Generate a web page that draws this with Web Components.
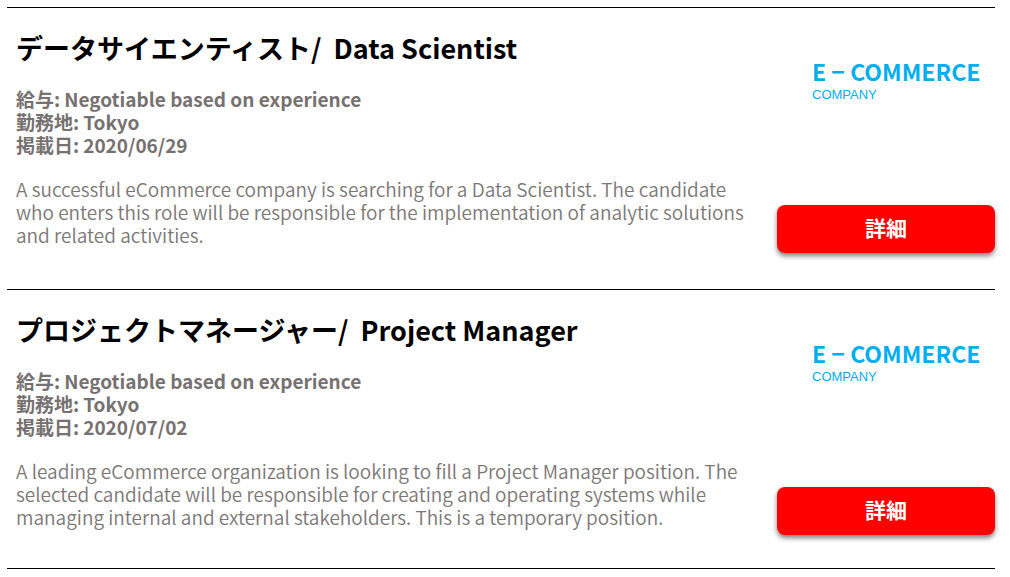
<!DOCTYPE html>
<html lang="ja">
<head>
<meta charset="utf-8">
<meta name="viewport" content="width=device-width, initial-scale=1">
<title>求人情報</title>
<style>
  body { margin: 0; background: #fff; font-family: "Noto Sans CJK JP", "Noto Sans", sans-serif; }
</style>
</head>
<body>
<job-list>
  <job-card>
    <span slot="title-ja">データサイエンティスト/</span>
    <span slot="title-en">Data Scientist</span>
    <span slot="salary">Negotiable based on experience</span>
    <span slot="location">Tokyo</span>
    <span slot="date">2020/06/29</span>
    A successful eCommerce company is searching for a Data Scientist. The candidate who enters this role will be responsible for the implementation of analytic solutions and related activities.
    <company-logo slot="logo"></company-logo>
  </job-card>
  <job-card>
    <span slot="title-ja">プロジェクトマネージャー/</span>
    <span slot="title-en">Project Manager</span>
    <span slot="salary">Negotiable based on experience</span>
    <span slot="location">Tokyo</span>
    <span slot="date">2020/07/02</span>
    A leading eCommerce organization is looking to fill a Project Manager position. The selected candidate will be responsible for creating and operating systems while managing internal and external stakeholders. This is a temporary position.
    <company-logo slot="logo"></company-logo>
  </job-card>
</job-list>

<template id="job-list">
  <style>
    :host { display: block; margin: 7px 15px 8px 7px; border-bottom: 1px solid #000; }
  </style>
  <slot></slot>
</template>

<template id="company-logo">
  <style>
    :host { display: block; color: #00aeef; }
    .name { font-size: 23px; line-height: 26px; font-weight: 700; white-space: nowrap; }
    .kind { font-family: "Liberation Sans", Arial, sans-serif; font-size: 13px; line-height: 22px; }
  </style>
  <div class="name">E − COMMERCE</div>
  <div class="kind">COMPANY</div>
</template>

<template id="detail-button">
  <style>
    :host { display: block; }
    button {
      display: block; width: 100%; height: 48px; padding: 0 0 4px; border: 0; border-radius: 8px;
      background: #f00; color: #fff; font: inherit; font-size: 21px; line-height: 32px; font-weight: 700;
      box-shadow: 0 3px 5px rgba(0, 0, 0, .5); cursor: pointer;
    }
  </style>
  <button type="button"><slot></slot></button>
</template>

<template id="job-card">
  <style>
    :host { display: block; border-top: 1px solid #000; }
    article { display: grid; grid-template-columns: minmax(0, 1fr) 218px; column-gap: 30px; padding-left: 9px; }
    .text { padding: 20px 0 43px; }
    :host(:last-of-type) .text { padding-bottom: 40px; }
    h2 { display: flex; flex-wrap: wrap; column-gap: 12px; margin: 0 0 19px; font-size: 27px; line-height: 40px; font-weight: 700; color: #000; }
    dl { margin: 0 0 21px; font-size: 19px; line-height: 23px; font-weight: 700; color: #767171; }
    dl div { display: flex; gap: 4px; }
    dd { margin: 0; }
    p { margin: 0; font-size: 19px; line-height: 23px; font-weight: 350; color: #7c7777; }
    aside { display: flex; flex-direction: column; gap: 99px; padding-top: 50px; }
    .logo { padding-left: 35px; }
  </style>
  <article>
    <div class="text">
      <h2><slot name="title-ja"></slot><slot name="title-en"></slot></h2>
      <dl>
        <div><dt>給与:</dt><dd><slot name="salary"></slot></dd></div>
        <div><dt>勤務地:</dt><dd><slot name="location"></slot></dd></div>
        <div><dt>掲載日:</dt><dd><slot name="date"></slot></dd></div>
      </dl>
      <p><slot></slot></p>
    </div>
    <aside>
      <div class="logo"><slot name="logo"></slot></div>
      <detail-button>詳細</detail-button>
    </aside>
  </article>
</template>

<script>
  const stamp = (host, id) =>
    host.attachShadow({ mode: "open" }).append(document.getElementById(id).content.cloneNode(true));

  class JobList extends HTMLElement { constructor() { super(); stamp(this, "job-list"); } }
  class JobCard extends HTMLElement { constructor() { super(); stamp(this, "job-card"); } }
  class CompanyLogo extends HTMLElement { constructor() { super(); stamp(this, "company-logo"); } }
  class DetailButton extends HTMLElement { constructor() { super(); stamp(this, "detail-button"); } }

  customElements.define("job-list", JobList);
  customElements.define("company-logo", CompanyLogo);
  customElements.define("detail-button", DetailButton);
  customElements.define("job-card", JobCard);
</script>
</body>
</html>
